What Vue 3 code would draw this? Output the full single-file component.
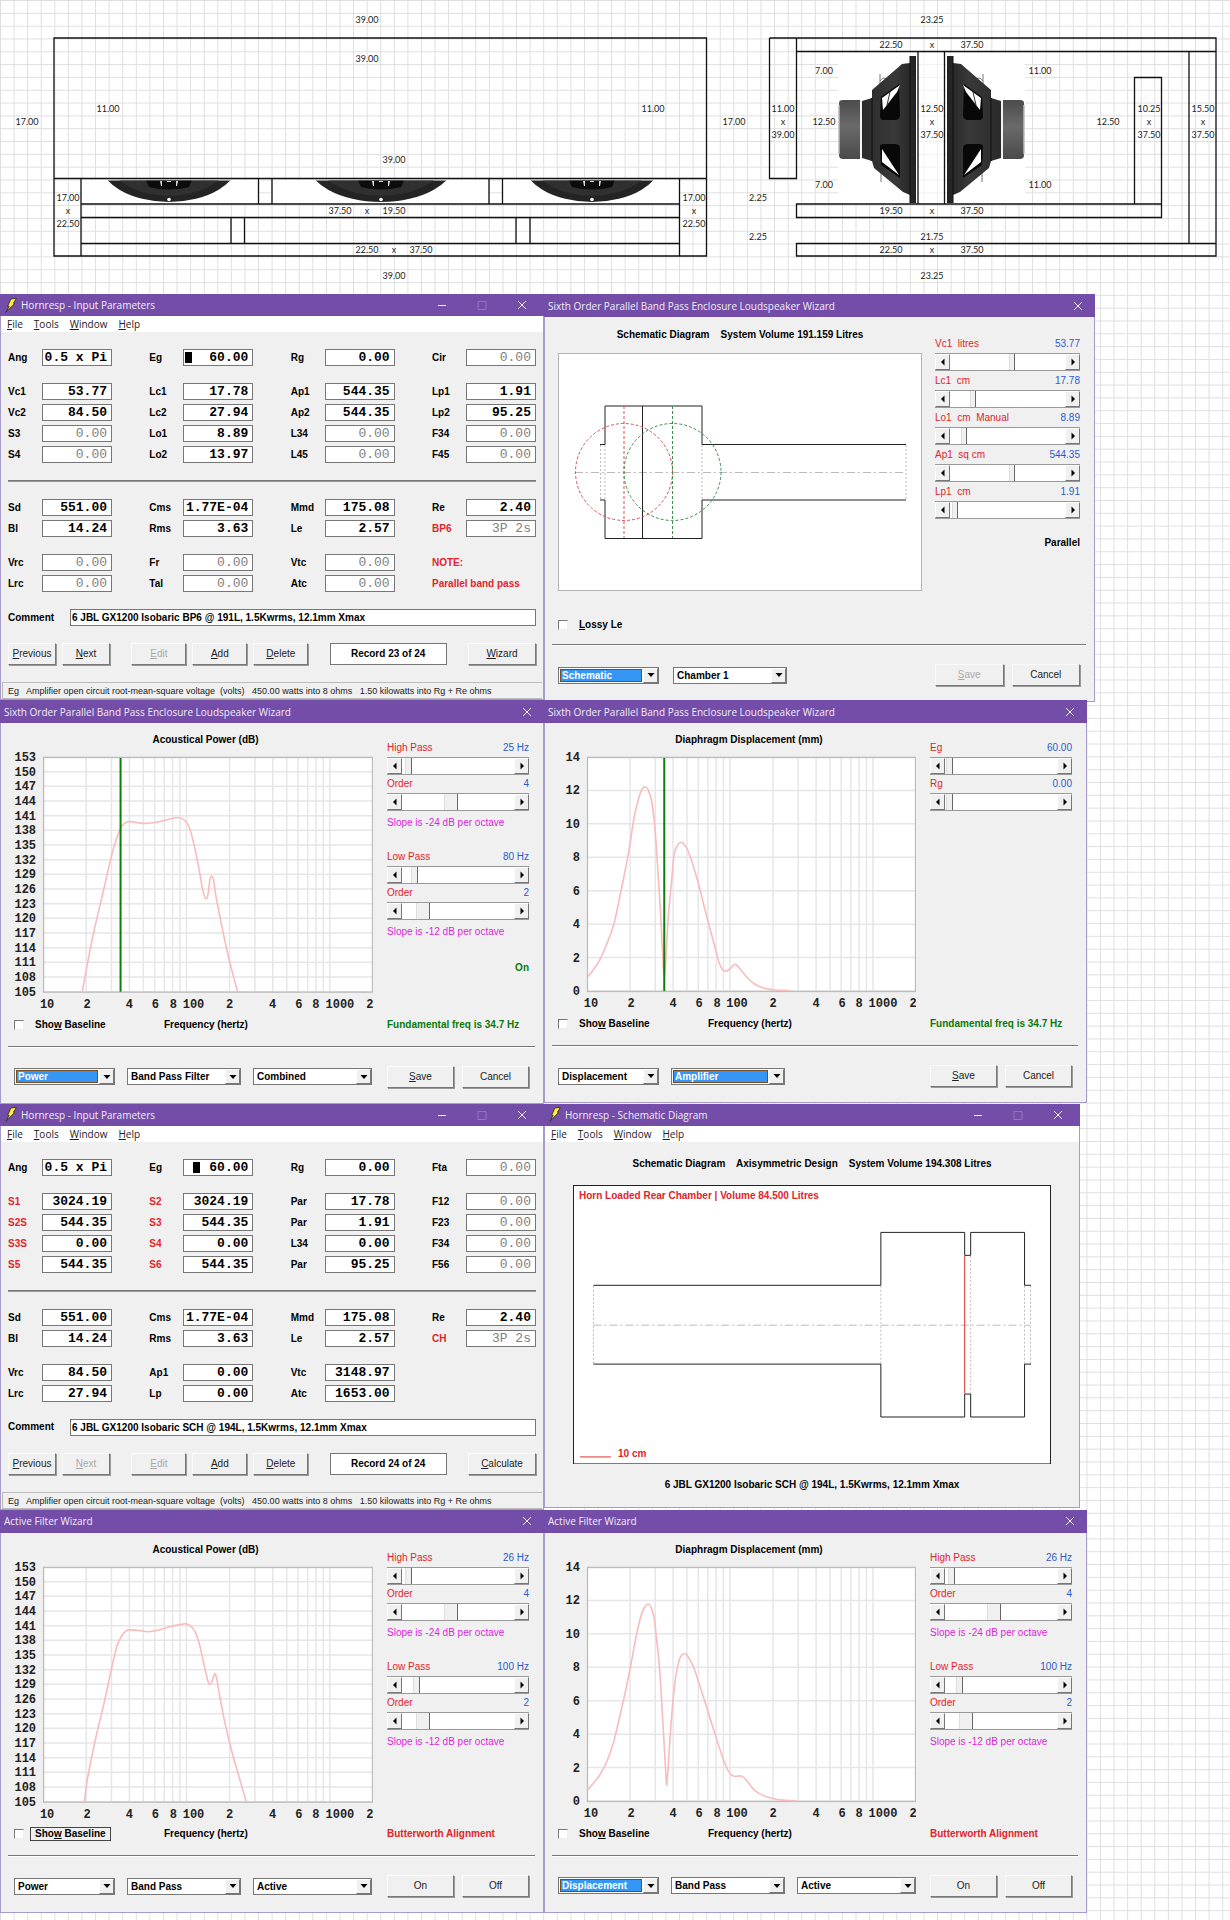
<script setup>
import { reactive } from "vue";

// cabinet drawing -----------------------------------------------------------

const boardLines =
  "M54 38H706.5V256H54Z M54 178.5H706.5 M81 178.5V256 M679.5 178.5V256 " +
  "M81 204H679.5 M81 217.5H679.5 M81 243.5H679.5 " +
  "M258.5 178.5V204 M272 178.5V204 M489 178.5V204 M502.5 178.5V204 " +
  "M231 217.5V243.5 M244.5 217.5V243.5 M516 217.5V243.5 M530 217.5V243.5 " +
  "M769.5 38H1216V256H796.5V243.5H1216 M769.5 38V178.5H796.5V38 " +
  "M796.5 51.5H1216 M1189 51.5V243.5 M796.5 204H1161.5V217.5H796.5Z " +
  "M1134.5 204V77.5H1161.5V204 M918 51.5V204 M944.5 51.5V204";

const dims = [
  [367, 20, "39.00"], [367, 59, "39.00"], [394, 160, "39.00"], [394, 276, "39.00"],
  [108, 109, "11.00"], [653, 109, "11.00"], [27, 122, "17.00"], [734, 122, "17.00"],
  [68, 198, "17.00"], [68, 211, "x"], [68, 224, "22.50"],
  [694, 198, "17.00"], [694, 211, "x"], [694, 224, "22.50"],
  [340, 211, "37.50"], [367, 211, "x"], [394, 211, "19.50"],
  [367, 250, "22.50"], [394, 250, "x"], [421, 250, "37.50"],
  [932, 20, "23.25"], [932, 276, "23.25"], [932, 237, "21.75"],
  [891, 45, "22.50"], [932, 45, "x"], [972, 45, "37.50"],
  [891, 211, "19.50"], [932, 211, "x"], [972, 211, "37.50"],
  [891, 250, "22.50"], [932, 250, "x"], [972, 250, "37.50"],
  [824, 71, "7.00"], [824, 185, "7.00"], [1040, 71, "11.00"], [1040, 185, "11.00"],
  [783, 109, "11.00"], [783, 122, "x"], [783, 135, "39.00"],
  [824, 122, "12.50"], [1108, 122, "12.50"],
  [932, 109, "12.50"], [932, 122, "x"], [932, 135, "37.50"],
  [1149, 109, "10.25"], [1149, 122, "x"], [1149, 135, "37.50"],
  [1203, 109, "15.50"], [1203, 122, "x"], [1203, 135, "37.50"],
  [758, 198, "2.25"], [758, 237, "2.25"],
];

const cones = [
  { cx: 169, rx: 61 },
  { cx: 381, rx: 65 },
  { cx: 592, rx: 61 },
];

// plots ---------------------------------------------------------------------

const PLOT = { x: 29, y: 8, w: 329, h: 234 };
const DECADE = PLOT.w / Math.log10(200);

const freqX = (f) => PLOT.x + DECADE * Math.log10(f / 10);

const gridFreqs = [
  20, 30, 40, 50, 60, 70, 80, 90, 100, 200, 300, 400, 500, 600, 700, 800, 900, 1000,
];

const xTicks = [
  [33, "10"], [73, "2"], [115, "4"], [141, "6"], [159, "8"], [179, "100"],
  [215, "2"], [258, "4"], [284, "6"], [301, "8"], [325, "1000"], [355, "2"],
];

const ticks = (from, to, step) => {
  const out = [];
  for (let v = from; v >= to; v -= step) {
    out.push({ text: v, y: PLOT.y + (PLOT.h * (from - v)) / (from - to) });
  }
  return out;
};

const dbTicks = ticks(153, 105, 3);
const mmTicks = ticks(14, 0, 2);

// Catmull-Rom through the sampled response
const smooth = (pts) => {
  let d = `M${pts[0][0]} ${pts[0][1]}`;
  for (let i = 0; i < pts.length - 1; i++) {
    const a = pts[i - 1] || pts[i];
    const b = pts[i];
    const c = pts[i + 1];
    const e = pts[i + 2] || c;
    d += `C${b[0] + (c[0] - a[0]) / 6} ${b[1] + (c[1] - a[1]) / 6} `;
    d += `${c[0] - (e[0] - b[0]) / 6} ${c[1] - (e[1] - b[1]) / 6} ${c[0]} ${c[1]}`;
  }
  return d;
};

const powerA = smooth([
  [39.2, 234], [43.4, 210.6], [50.3, 175.6], [60.8, 130.6], [67.7, 100.6], [73, 82],
  [77.1, 71.3], [81.6, 66], [86.8, 64.4], [99.7, 66.2], [112.9, 65], [123.3, 62.6],
  [134.5, 60.3], [141.4, 63.3], [146, 70.6], [150.5, 87.3], [155.3, 110.6],
  [159.1, 132.3], [162.3, 141.3], [164.4, 137.3], [166.4, 122.3], [168.2, 118.6],
  [169.9, 122.3], [172.7, 140.6], [179, 172.3], [186, 204], [194, 234],
]);

const powerB = smooth([
  [41.3, 234], [44.1, 212.3], [52.1, 172.3], [60.8, 135.7], [68.4, 100.7], [73.6, 79],
  [78.2, 69], [81.6, 64.7], [85.8, 62.7], [95.5, 63.3], [104.2, 64.5], [114.7, 63],
  [126.8, 59.3], [137.2, 57.3], [142.5, 56.7], [147.7, 59.3], [152.2, 65.7],
  [156.4, 79], [161.6, 102.3], [164.4, 114], [166.4, 117.3], [168.5, 114],
  [171, 106.7], [173, 110.7], [176.2, 129], [181.4, 155.7], [188.7, 185.7],
  [196.3, 212.3], [202.6, 234],
]);

const displacementA = smooth([
  [1, 219.7], [5.4, 214], [12.5, 203.3], [19.6, 187.3], [26.8, 167.3], [34, 134],
  [39.3, 107.3], [42.9, 87.3], [47.1, 60.7], [51.8, 40.7], [55.4, 31.7], [58.2, 29.7],
  [61, 32.3], [64.6, 44], [67.9, 70.7], [70.7, 110.7], [73.6, 157.3], [76, 204],
  [77.1, 219], [78.6, 207], [81, 164], [84.6, 124], [87.1, 97.3], [90.4, 88.3],
  [93.9, 85.3], [97.1, 87.3], [101.8, 95.7], [110.7, 124], [119.6, 159],
  [126.8, 185.7], [132.1, 205.7], [136, 213], [138.9, 214.3], [142.9, 212],
  [147.9, 207.3], [152.1, 210.7], [158.9, 219], [167.9, 227.3], [182, 232.3],
  [203.6, 233.7],
]);

const displacementB = smooth([
  [0.7, 222.7], [6.8, 215.7], [12.1, 209], [19.3, 195.7], [26.4, 175.7],
  [33.6, 145.7], [38.9, 122.3], [43.6, 99], [48.6, 72.3], [53.9, 49], [57.9, 39.7],
  [61.1, 37], [63.9, 39.7], [67.1, 50.7], [69.6, 72.3], [72.9, 105.7], [75.7, 152.3],
  [78.2, 195.7], [79.6, 217.7], [81, 202.3], [83.9, 159], [87.1, 122.3], [90, 102.3],
  [93.6, 89.7], [97.5, 86.7], [100.7, 89], [106.8, 100.7], [113.9, 122.3],
  [122.9, 150.7], [131.8, 179], [138.9, 199], [143.6, 207.3], [147.9, 209.3],
  [154.3, 209], [158.6, 212.3], [169.3, 224.7], [183.6, 231], [197.9, 233.3],
  [209, 233.7],
]);

// windows -------------------------------------------------------------------

// field: [label, value, flags] with r = red label, d = disabled
const paramsA = [
  [["Ang", "0.5 x Pi"], ["Eg", "60.00", "c"], ["Rg", "0.00"], ["Cir", "0.00", "d"]],
  [
    ["Vc1", "53.77"], ["Lc1", "17.78"], ["Ap1", "544.35"], ["Lp1", "1.91"],
    ["Vc2", "84.50"], ["Lc2", "27.94"], ["Ap2", "544.35"], ["Lp2", "95.25"],
    ["S3", "0.00", "d"], ["Lo1", "8.89"], ["L34", "0.00", "d"], ["F34", "0.00", "d"],
    ["S4", "0.00", "d"], ["Lo2", "13.97"], ["L45", "0.00", "d"], ["F45", "0.00", "d"],
  ],
  [
    ["Sd", "551.00"], ["Cms", "1.77E-04"], ["Mmd", "175.08"], ["Re", "2.40"],
    ["Bl", "14.24"], ["Rms", "3.63"], ["Le", "2.57"], ["BP6", "3P 2s", "rd"],
  ],
  [
    ["Vrc", "0.00", "d"], ["Fr", "0.00", "d"], ["Vtc", "0.00", "d"], ["NOTE:", null, "r"],
    ["Lrc", "0.00", "d"], ["Tal", "0.00", "d"], ["Atc", "0.00", "d"],
    ["Parallel band pass", null, "r"],
  ],
];

const paramsB = [
  [["Ang", "0.5 x Pi"], ["Eg", "60.00", "m"], ["Rg", "0.00"], ["Fta", "0.00", "d"]],
  [
    ["S1", "3024.19", "r"], ["S2", "3024.19", "r"], ["Par", "17.78"], ["F12", "0.00", "d"],
    ["S2S", "544.35", "r"], ["S3", "544.35", "r"], ["Par", "1.91"], ["F23", "0.00", "d"],
    ["S3S", "0.00", "r"], ["S4", "0.00", "r"], ["L34", "0.00"], ["F34", "0.00", "d"],
    ["S5", "544.35", "r"], ["S6", "544.35", "r"], ["Par", "95.25"], ["F56", "0.00", "d"],
  ],
  [
    ["Sd", "551.00"], ["Cms", "1.77E-04"], ["Mmd", "175.08"], ["Re", "2.40"],
    ["Bl", "14.24"], ["Rms", "3.63"], ["Le", "2.57"], ["CH", "3P 2s", "rd"],
  ],
  [
    ["Vrc", "84.50"], ["Ap1", "0.00"], ["Vtc", "3148.97"], ["", null],
    ["Lrc", "27.94"], ["Lp", "0.00"], ["Atc", "1653.00"],
  ],
];

const statusText =
  "Eg   Amplifier open circuit root-mean-square voltage  (volts)   450.00 watts into 8 ohms   1.50 kilowatts into Rg + Re ohms";

const filterSliders = (hp, lp, lowPos) => [
  { label: "High Pass", value: `${hp} Hz`, pos: 3, thumb: "slim" },
  { label: "Order", value: "4", pos: 43, thumb: "wide", note: "Slope is -24 dB per octave" },
  { label: "Low Pass", value: `${lp} Hz`, pos: lowPos, thumb: "slim" },
  { label: "Order", value: "2", pos: 14, thumb: "wide", note: "Slope is -12 dB per octave" },
];

const rows = reactive([
  {
    cls: "row-1",
    windows: [
      {
        kind: "params",
        title: "Hornresp - Input Parameters",
        groups: paramsA,
        comment: "6 JBL GX1200 Isobaric BP6 @ 191L, 1.5Kwrms, 12.1mm Xmax",
        record: "Record 23 of 24",
        nextOff: false,
        action: "Wizard",
      },
      {
        kind: "wizard",
        title: "Sixth Order Parallel Band Pass Enclosure Loudspeaker Wizard",
        heading: "Schematic Diagram    System Volume 191.159 Litres",
        chamber: true,
        sliders: [
          { label: "Vc1  litres", value: "53.77", pos: 54, thumb: "thin" },
          { label: "Lc1  cm", value: "17.78", pos: 18, thumb: "thin" },
          { label: "Lo1  cm  Manual", value: "8.89", pos: 10, thumb: "thin" },
          { label: "Ap1  sq cm", value: "544.35", pos: 54, thumb: "thin" },
          { label: "Lp1  cm", value: "1.91", pos: 2, thumb: "thin" },
        ],
        check: ["", "L", "ossy Le"],
        side: "Parallel",
        selects: [
          { text: "Schematic", cls: "s-a", active: true },
          { text: "Chamber 1", cls: "s-b" },
        ],
        buttons: [{ key: "S", rest: "ave", off: true }, { key: "", rest: "Cancel" }],
      },
    ],
  },
  {
    cls: "row-2",
    windows: [
      {
        kind: "wizard",
        title: "Sixth Order Parallel Band Pass Enclosure Loudspeaker Wizard",
        heading: "Acoustical Power (dB)",
        curve: powerA,
        ticks: dbTicks,
        marker: 34.7,
        sliders: filterSliders(25, 80, 9),
        side: "On",
        status: { text: "Fundamental freq is 34.7 Hz", cls: "green" },
        check: ["Sho", "w", " Baseline"],
        selects: [
          { text: "Power", cls: "s-a", active: true },
          { text: "Band Pass Filter", cls: "s-b" },
          { text: "Combined", cls: "s-c" },
        ],
        buttons: [{ key: "S", rest: "ave" }, { key: "", rest: "Cancel" }],
      },
      {
        kind: "wizard",
        title: "Sixth Order Parallel Band Pass Enclosure Loudspeaker Wizard",
        heading: "Diaphragm Displacement (mm)",
        curve: displacementA,
        ticks: mmTicks,
        marker: 34.7,
        sliders: [
          { label: "Eg", value: "60.00", pos: 1, thumb: "slim" },
          { label: "Rg", value: "0.00", pos: 1, thumb: "slim" },
        ],
        status: { text: "Fundamental freq is 34.7 Hz", cls: "green" },
        check: ["Sho", "w", " Baseline"],
        selects: [
          { text: "Displacement", cls: "s-a" },
          { text: "Amplifier", cls: "s-b", active: true },
        ],
        buttons: [{ key: "S", rest: "ave" }, { key: "", rest: "Cancel" }],
      },
    ],
  },
  {
    cls: "row-3",
    windows: [
      {
        kind: "params",
        title: "Hornresp - Input Parameters",
        groups: paramsB,
        comment: "6 JBL GX1200 Isobaric SCH @ 194L, 1.5Kwrms, 12.1mm Xmax",
        record: "Record 24 of 24",
        nextOff: true,
        action: "Calculate",
      },
      {
        kind: "diagram",
        title: "Hornresp - Schematic Diagram",
        heading: "Schematic Diagram    Axisymmetric Design    System Volume 194.308 Litres",
        caption: "6 JBL GX1200 Isobaric SCH @ 194L, 1.5Kwrms, 12.1mm Xmax",
      },
    ],
  },
  {
    cls: "row-4",
    windows: [
      {
        kind: "wizard",
        title: "Active Filter Wizard",
        heading: "Acoustical Power (dB)",
        curve: powerB,
        ticks: dbTicks,
        sliders: filterSliders(26, 100, 10),
        status: { text: "Butterworth Alignment", cls: "red" },
        check: ["Sho", "w", " Baseline"],
        checkFocus: true,
        selects: [
          { text: "Power", cls: "s-a" },
          { text: "Band Pass", cls: "s-b" },
          { text: "Active", cls: "s-c" },
        ],
        buttons: [{ key: "", rest: "On" }, { key: "", rest: "Off" }],
      },
      {
        kind: "wizard",
        title: "Active Filter Wizard",
        heading: "Diaphragm Displacement (mm)",
        curve: displacementB,
        ticks: mmTicks,
        sliders: filterSliders(26, 100, 10),
        status: { text: "Butterworth Alignment", cls: "red" },
        check: ["Sho", "w", " Baseline"],
        selects: [
          { text: "Displacement", cls: "s-a", active: true },
          { text: "Band Pass", cls: "s-b" },
          { text: "Active", cls: "s-c" },
        ],
        buttons: [{ key: "", rest: "On" }, { key: "", rest: "Off" }],
      },
    ],
  },
]);

const menus = ["File", "Tools", "Window", "Help"];

const has = (field, flag) => (field[2] || "").includes(flag);

const nudge = (slider, step) => {
  slider.pos = Math.min(100, Math.max(0, Number(slider.pos) + step));
};
</script>

<template>
  <main class="sheet">
    <svg class="cells" aria-hidden="true">
      <defs>
        <pattern id="cell" width="13.58" height="12.82" patternUnits="userSpaceOnUse">
          <path d="M0.5 0V12.82M0 0.5H13.58" stroke="#dfdfdf" fill="none" />
        </pattern>
      </defs>
      <rect width="100%" height="100%" fill="url(#cell)" />
    </svg>

    <svg class="cabinet" viewBox="0 0 1230 294" role="img" aria-label="Cabinet dimensions">
      <defs>
        <linearGradient id="magnet" x1="0" x2="0" y1="0" y2="1">
          <stop offset="0" stop-color="#4c4c4c" />
          <stop offset="0.45" stop-color="#6a6a6a" />
          <stop offset="1" stop-color="#4a4a4a" />
        </linearGradient>
        <linearGradient id="basket" x1="0" x2="1">
          <stop offset="0" stop-color="#2a2a2a" />
          <stop offset="0.6" stop-color="#393939" />
          <stop offset="1" stop-color="#222" />
        </linearGradient>
        <clipPath id="baffle"><path d="M81 180.5H680V204H81Z" /></clipPath>
        <g id="driver">
          <path d="M50 40v-10 M50 37q4-6 8 0 M51 128v10" stroke="#777" fill="none" />
          <path d="M9 59Q9 56 13 56H30V115H13Q9 115 9 111Z" fill="url(#magnet)" />
          <path d="M9 61V110" stroke="#bbb" stroke-width="1.5" />
          <path d="M31 57V114" stroke="#eee" stroke-width="1.5" />
          <path
            d="M32 57L42 54V46L72 20L80 19V12H86V159H80V151L73 148L44 124L42 117L32 114Z"
            fill="url(#basket)"
          />
          <path d="M80 12V159" stroke="#111" />
          <path d="M42 54V117" stroke="#1f1f1f" stroke-width="2" />
          <path d="M51 53L69 40L70 72Q69 76 65 76H53Q50 75 50 72Z" fill="#080808" />
          <path d="M52 54L70 41L67 48L53 66Z" fill="#fff" />
          <path d="M60 48L57 61" stroke="#333" />
          <path d="M50 103Q50 100 53 100H66Q70 101 70 104L70 134L51 121Z" fill="#080808" />
          <path d="M52 105L69 131L52 118Z" fill="#fff" />
        </g>
      </defs>

      <path d="M838 53H917V203H838Z M946 53H1025V203H946Z" fill="#fff" />
      <path d="M82 180H258V203H82Z M273 180H488V203H273Z M503 180H679V203H503Z" fill="#fff" />
      <path d="M919 53H944V203H919Z" fill="#fff" opacity="0.6" />
      <g clip-path="url(#baffle)">
        <g v-for="c in cones" :key="c.cx">
          <ellipse :cx="c.cx" cy="160" :rx="c.rx * 1.15" ry="42" fill="#242424" />
          <ellipse :cx="c.cx" cy="158" :rx="c.rx" ry="38" fill="#303030" />
          <path :d="`M${c.cx - 23} 180.5L${c.cx - 20} 187Q${c.cx} 192 ${c.cx + 20} 187L${c.cx + 23} 180.5Z`" fill="#0c0c0c" />
          <path
            :d="`M${c.cx - 9} 181h2v5h-1z M${c.cx + 7} 181h2l-1 5h-1z M${c.cx - 2} 181h4v1h-4z`"
            fill="#ddd"
          />
          <circle :cx="c.cx" cy="199.5" r="1.8" fill="#fff" />
        </g>
      </g>
      <use href="#driver" x="830" y="44" />
      <use href="#driver" transform="translate(1033 44) scale(-1 1)" />
      <path :d="boardLines" fill="none" stroke="#111" stroke-width="1.3" />
      <text v-for="(d, i) in dims" :key="i" class="dim" :x="d[0]" :y="d[1] + 3">{{ d[2] }}</text>
    </svg>

    <div v-for="(row, r) in rows" :key="r" class="row" :class="row.cls">
      <section v-for="(win, w) in row.windows" :key="w" class="window" :class="win.kind">
        <header class="titlebar">
          <svg v-if="win.kind !== 'wizard'" class="bolt" viewBox="0 0 12 15" aria-hidden="true">
            <path d="M6 0.8L11.4 0.5L8.400 5.200L9.600 5.400L1 14.300L4.200 8.400L2.600 8.200Z" fill="#ffec3d" stroke="#222" stroke-width="0.8" />
          </svg>
          <h2>{{ win.title }}</h2>
          <button v-if="win.kind !== 'wizard'" type="button" aria-label="Minimize">
            <svg viewBox="0 0 10 10"><path d="M1 5.5H9" /></svg>
          </button>
          <button v-if="win.kind !== 'wizard'" type="button" aria-label="Maximize" disabled>
            <svg viewBox="0 0 10 10"><path d="M1 1.5H9V9.5H1Z" /></svg>
          </button>
          <button type="button" aria-label="Close">
            <svg viewBox="0 0 10 10"><path d="M1 1L9 9M9 1L1 9" /></svg>
          </button>
        </header>

        <nav v-if="win.kind !== 'wizard'" class="menu">
          <button v-for="m in menus" :key="m" type="button"><u>{{ m[0] }}</u>{{ m.slice(1) }}</button>
        </nav>

        <form v-if="win.kind === 'params'" class="params-body" @submit.prevent>
          <template v-for="(group, g) in win.groups" :key="g">
            <hr v-if="g === 2" />
            <div class="fields">
              <div v-for="(f, i) in group" :key="i" class="field">
                <label v-if="f[1] !== null" :class="{ red: has(f, 'r') }" :for="`f-${r}-${g}-${i}`">{{ f[0] }}</label>
                <span v-else class="remark" :class="{ red: has(f, 'r') }">{{ f[0] }}</span>
                <input
                  v-if="f[1] !== null"
                  :id="`f-${r}-${g}-${i}`"
                  v-model="f[1]"
                  type="text"
                  :disabled="has(f, 'd')"
                />
                <i v-if="has(f, 'c')" class="caret"></i>
                <i v-if="has(f, 'm')" class="caret moved"></i>
              </div>
            </div>
          </template>
          <div class="comment">
            <label :for="`comment-${r}`">Comment</label>
            <input :id="`comment-${r}`" v-model="win.comment" type="text" />
          </div>
          <div class="record-bar">
            <button class="btn w-nav" type="button"><u>P</u>revious</button>
            <button class="btn w-nav" type="button" :disabled="win.nextOff"><u>N</u>ext</button>
            <span class="spacer"></span>
            <button class="btn w-edit" type="button" disabled><u>E</u>dit</button>
            <button class="btn w-edit" type="button"><u>A</u>dd</button>
            <button class="btn w-edit" type="button"><u>D</u>elete</button>
            <span class="spacer"></span>
            <output class="record">{{ win.record }}</output>
            <span class="spacer"></span>
            <button class="btn w-action" type="button"><u>{{ win.action[0] }}</u>{{ win.action.slice(1) }}</button>
          </div>
        </form>
        <footer v-if="win.kind === 'params'" class="statusbar">{{ statusText }}</footer>

        <form v-if="win.kind === 'wizard'" class="wizard-body" :class="{ chamber: win.chamber }" @submit.prevent>
          <div class="main">
            <div class="plot">
              <h3>{{ win.heading }}</h3>
              <svg v-if="win.chamber" class="scheme" viewBox="0 0 364 238" role="img" aria-label="Chamber schematic">
                <rect x="0.5" y="0.5" width="363" height="237" fill="#fff" stroke="#b4b4b4" />
                <g fill="none">
                  <path d="M17 119.5H348" stroke="#bbb" stroke-dasharray="8 3 2 3" />
                  <path d="M42.5 92V147M47 92V147M144 92V147M348 92V147" stroke="#bbb" stroke-dasharray="2 2" />
                  <path d="M42 91.5H47V53H144V91.5H348M42 147H47V185.5H144V147H348M84.5 53V185" stroke="#222" />
                  <g stroke-dasharray="3 2">
                    <path d="M66 53V185" stroke="#e05050" />
                    <circle cx="66" cy="119" r="48.5" stroke="#e05050" />
                    <path d="M114.5 53V185" stroke="#3f8f4f" />
                    <circle cx="114.5" cy="119" r="48.5" stroke="#3f8f4f" />
                  </g>
                </g>
              </svg>
              <svg v-else class="chart" viewBox="0 0 358 262" role="img" :aria-label="win.heading">
                <rect x="29" y="8" width="329" height="234" fill="#fff" />
                <g stroke="#e6e6e6" stroke-width="1.5">
                  <line v-for="f in gridFreqs" :key="f" :x1="freqX(f)" :x2="freqX(f)" y1="8" y2="242" />
                  <line v-for="t in win.ticks" :key="t.text" x1="29" x2="358" :y1="t.y" :y2="t.y" />
                </g>
                <rect x="29.5" y="8.5" width="328" height="234" fill="none" stroke="#bcbcbc" stroke-width="1.3" />
                <path :d="win.curve" transform="translate(29 8)" fill="none" stroke="#f8bcbc" stroke-width="1.6" />
                <path v-if="win.marker" :d="`M${freqX(win.marker)} 9V242`" stroke="#0a800a" stroke-width="2" />
                <text v-for="t in win.ticks" :key="t.text" class="tick y" x="22" :y="t.y + 4">{{ t.text }}</text>
                <text v-for="(t, i) in xTicks" :key="i" class="tick x" :x="t[0]" y="258">{{ t[1] }}</text>
              </svg>
            </div>

            <div class="panel">
              <div v-for="(s, i) in win.sliders" :key="i" class="control">
                <div class="caption">
                  <label class="red" :for="`s-${r}-${w}-${i}`">{{ s.label }}</label>
                  <output>{{ s.value }}</output>
                </div>
                <div class="scroll">
                  <button type="button" aria-label="Decrease" @click="nudge(s, -1)">
                    <svg viewBox="0 0 8 8"><path d="M5.5 0.5V7.5L2 4Z" /></svg>
                  </button>
                  <input :id="`s-${r}-${w}-${i}`" v-model="s.pos" type="range" min="0" max="100" :class="s.thumb" />
                  <button type="button" aria-label="Increase" @click="nudge(s, 1)">
                    <svg viewBox="0 0 8 8"><path d="M2.5 0.5V7.5L6 4Z" /></svg>
                  </button>
                </div>
                <p v-if="s.note" class="note">{{ s.note }}</p>
              </div>
              <p v-if="win.side" class="side" :class="{ green: !win.chamber }">{{ win.side }}</p>
            </div>
          </div>

          <div class="options">
            <div class="axis">
              <label class="check">
                <input type="checkbox" />
                <span :class="{ focus: win.checkFocus }">{{ win.check[0] }}<u>{{ win.check[1] }}</u>{{ win.check[2] }}</span>
              </label>
              <span v-if="!win.chamber">Frequency (hertz)</span>
            </div>
            <p v-if="win.status" class="state" :class="win.status.cls">{{ win.status.text }}</p>
          </div>

          <hr />

          <div class="actions">
            <span v-for="s in win.selects" :key="s.text" class="combo" :class="[s.cls, { active: s.active }]">
              <select :aria-label="s.text">
                <option>{{ s.text }}</option>
              </select>
              <i><svg viewBox="0 0 8 8"><path d="M0.5 2H7.5L4 6Z" /></svg></i>
            </span>
            <span class="push">
              <button v-for="b in win.buttons" :key="b.rest" class="btn" type="button" :disabled="b.off"><u>{{ b.key }}</u>{{ b.rest }}</button>
            </span>
          </div>
        </form>

        <div v-if="win.kind === 'diagram'" class="diagram-body">
          <h3>{{ win.heading }}</h3>
          <figure>
            <svg viewBox="0 0 479 280" role="img" aria-label="Horn schematic">
              <rect x="0.5" y="0.5" width="478" height="279" fill="#fff" stroke="#222" />
              <g fill="none">
                <path d="M20.5 140.5H458" stroke="#bbb" stroke-dasharray="8 3 2 3" />
                <path d="M20.5 101V179M308.5 101V179M398.5 71V209M452.5 101V179M458.5 101V179" stroke="#bbb" stroke-dasharray="2 2" />
                <path d="M20.5 100.5H308.5V47.5H392.5V70.5H398.5V47.5H452.5V100.5H459" stroke="#222" />
                <path d="M20.5 179.5H308.5V232.5H392.5V209.5H398.5V232.5H452.5V179.5H459" stroke="#222" />
                <path d="M392.5 71V209M7 272.5H38" stroke="#e03030" />
              </g>
            </svg>
            <span class="volume red">Horn Loaded Rear Chamber | Volume 84.500 Litres</span>
            <span class="scale red">10 cm</span>
          </figure>
          <p>{{ win.caption }}</p>
        </div>
      </section>
    </div>
  </main>
</template>

<style>
body {
  margin: 0;
}
</style>

<style scoped>
* {
  box-sizing: border-box;
}

.sheet {
  position: relative;
  min-height: 100vh;
  background: #fff;
  color: #000;
  font: 10px/18px "Liberation Sans", Arial, sans-serif;
}

.cells {
  position: absolute;
  inset: 0;
  width: 100%;
  height: 100%;
}

.cabinet {
  position: relative;
  display: block;
  width: 100%;
}

.dim {
  font: 9px Lato, sans-serif;
  text-anchor: middle;
  fill: #222;
}

.row {
  position: relative;
  display: grid;
  align-items: start;
}

.row-1 {
  grid-template-columns: minmax(0, 544fr) minmax(0, 551fr) 135fr;
}

.row-2,
.row-4 {
  grid-template-columns: minmax(0, 544fr) minmax(0, 543fr) 143fr;
}

.row-3 {
  grid-template-columns: minmax(0, 544fr) minmax(0, 536fr) 150fr;
}

.row-1 .wizard {
  margin-bottom: -3px;
}

.window {
  background: #f0f0f0;
  border: 1px solid #a79bcb;
  border-top: 0;
}

.titlebar {
  display: flex;
  align-items: center;
  height: 22px;
  margin: 0 -1px;
  padding: 0 2px 0 5px;
  background: #744da9;
  color: #f2ecf8;
}

.wizard .titlebar {
  height: 23px;
  padding: 0 0 0 4px;
}

.titlebar h2 {
  flex: 1;
  margin: 0;
  overflow: hidden;
  white-space: nowrap;
  font: 10px/22px "Open Sans", "Noto Sans", sans-serif;
}

.bolt {
  width: 12px;
  height: 15px;
  margin-right: 4px;
}

.titlebar button {
  width: 40px;
  height: 22px;
  padding: 0;
  border: 0;
  background: none;
}

.wizard .titlebar button {
  width: 34px;
}

.titlebar button svg {
  display: block;
  width: 10px;
  height: 10px;
  margin: auto;
  fill: none;
  stroke: #f2ecf8;
}

.titlebar button:disabled svg {
  stroke: #9474bd;
}

.menu {
  display: flex;
  gap: 11px;
  height: 16px;
  padding-left: 6px;
  background: #fff;
}

.menu button {
  padding: 0;
  border: 0;
  background: none;
  color: #222;
  font: 10px/16px "Open Sans", "Noto Sans", sans-serif;
}

.red {
  color: #e0242a;
}

.green {
  color: #0a7a0a;
}

/* input parameters */

.params-body {
  display: flex;
  flex-direction: column;
  gap: 17px;
  padding: 17px 7px 17px;
  font-weight: bold;
}

.fields {
  display: grid;
  grid-template-columns: repeat(4, 104px);
  justify-content: space-between;
  row-gap: 4px;
}

.field {
  position: relative;
  display: flex;
  justify-content: space-between;
  height: 17px;
  line-height: 17px;
}

.remark {
  white-space: nowrap;
}

.field input,
.comment input,
.record {
  height: 17px;
  border: 1px solid #777;
  background: #fff;
  color: #000;
}

.field input {
  width: 70px;
  padding: 0 4px 0 0;
  font: bold 13px/15px "Liberation Mono", monospace;
  text-align: right;
}

.field input:disabled {
  color: #808080;
  font-weight: normal;
}

.caret {
  position: absolute;
  left: 36px;
  top: 3px;
  width: 7px;
  height: 11px;
  background: #000;
}

.caret.moved {
  left: 44px;
}

hr {
  width: 100%;
  height: 2px;
  margin: 0;
  border: 0;
  background: #777;
  border-bottom: 1px solid #fff;
}

.params-body hr {
  border-bottom-color: #999;
}

.comment {
  display: flex;
  align-items: center;
  height: 17px;
}

.comment label {
  width: 62px;
}

.comment input {
  flex: 1;
  min-width: 0;
  padding: 0 1px;
  font: inherit;
  line-height: 15px;
}

.record-bar {
  display: flex;
  gap: 6px;
  height: 22px;
}

.spacer {
  flex: 1;
}

.btn {
  height: 22px;
  padding: 0;
  border: 1px solid;
  border-color: #fafafa #777 #777 #fafafa;
  box-shadow: 1px 1px 0 #999;
  background: #f0f0f0;
  color: #222;
  font: 10px/20px "Liberation Sans", Arial, sans-serif;
}

.btn:disabled {
  color: #aaa;
}

.w-nav {
  width: 48px;
}

.w-edit {
  width: 55px;
}

.w-action {
  width: 68px;
}

.record {
  width: 117px;
  height: 22px;
  line-height: 20px;
  text-align: center;
}

.statusbar {
  height: 17px;
  margin: 0 1px;
  padding-left: 5px;
  border: 1px solid #bbb;
  border-right: 0;
  overflow: hidden;
  color: #222;
  font-size: 9px;
  line-height: 16px;
  white-space: pre;
}

/* wizards */

.wizard-body {
  display: flex;
  flex-direction: column;
  padding: 8px 14px 15px 13px;
}

.main,
.options {
  display: grid;
  grid-template-columns: minmax(0, 1fr) 142px;
  column-gap: 14px;
}

h3 {
  margin: 0;
  font: bold 10px/18px "Liberation Sans", Arial, sans-serif;
  text-align: center;
  white-space: pre;
}

.plot h3 {
  padding-left: 24px;
}

.plot svg {
  display: block;
  width: 100%;
}

.tick {
  font: bold 12px "Liberation Mono", monospace;
  fill: #222;
}

.tick.y {
  text-anchor: end;
}

.tick.x {
  text-anchor: middle;
}

.panel {
  display: flex;
  flex-direction: column;
  padding-top: 8px;
}

.caption {
  display: flex;
  justify-content: space-between;
  line-height: 18px;
  white-space: pre;
}

.caption output {
  color: #2a5bd0;
}

.scroll {
  display: flex;
  height: 18px;
  border-top: 1px solid #999;
  border-bottom: 1px solid #999;
}

.scroll button {
  width: 15px;
  padding: 0;
  border: 1px solid;
  border-color: #fff #777 #777 #fff;
  background: #f0f0f0;
}

.scroll button svg,
.combo svg {
  display: block;
  width: 8px;
  height: 8px;
  margin: auto;
}

.scroll input {
  flex: 1;
  min-width: 0;
  height: 16px;
  margin: 0;
  appearance: none;
  background: #fff;
}

.scroll input::-webkit-slider-thumb {
  appearance: none;
  width: 7px;
  height: 16px;
  border: 0;
  border-right: 1px solid #666;
  border-left: 1px solid #ddd;
  background: #f0f0f0;
}

.scroll input.thin::-webkit-slider-thumb {
  width: 6px;
}

.scroll input.wide::-webkit-slider-thumb {
  width: 14px;
}

.note {
  margin: 0 0 13px;
  color: #d828d8;
  line-height: 24px;
  white-space: nowrap;
}

.side {
  margin: 2px 0 0;
  font-weight: bold;
  text-align: right;
}

.options {
  padding-top: 4px;
  font-weight: bold;
  white-space: nowrap;
}

.axis {
  display: grid;
  grid-template-columns: 150px 1fr;
}

.check {
  display: flex;
  align-items: center;
  gap: 6px;
}

.check input {
  appearance: none;
  width: 10px;
  height: 10px;
  margin: 0;
  border: 1px solid;
  border-color: #777 #eee #eee #777;
  background: #fff;
}

.check span {
  padding: 0 4px;
  border: 1px solid transparent;
  line-height: 12px;
}

.check .focus {
  border-color: #444;
}

.state {
  margin: 0;
}

.wizard-body hr {
  width: auto;
  margin: 12px -6px 18px;
}

.actions {
  display: flex;
  align-items: center;
  gap: 12px;
  height: 22px;
}

.combo {
  display: flex;
  height: 17px;
  border: 1px solid #777;
  background: #fff;
}

.combo select {
  flex: 1;
  min-width: 0;
  margin: 0;
  padding: 0 2px;
  appearance: none;
  border: 1px solid transparent;
  border-radius: 0;
  background: #fff;
  color: #000;
  font: bold 10px/13px "Liberation Sans", Arial, sans-serif;
}

.combo.active select {
  margin: 1px;
  padding: 0 1px;
  border-color: #7a4a20;
  background: #3596f5;
  color: #fff;
  line-height: 11px;
}

.combo i {
  display: flex;
  width: 15px;
  border: 1px solid;
  border-color: #fff #777 #777 #fff;
  background: #f0f0f0;
}

.s-a {
  width: 101px;
}

.s-b {
  width: 114px;
}

.s-c {
  width: 119px;
}

.push {
  display: grid;
  grid-template-columns: 1fr 1fr;
  gap: 8px;
  width: 142px;
  margin-left: auto;
}

.chamber {
  padding-top: 9px;
}

.chamber .main,
.chamber .options {
  grid-template-columns: minmax(0, 1fr) 145px;
  column-gap: 13px;
}

.chamber .plot h3 {
  padding-left: 0;
}

.chamber .scheme {
  margin-top: 9px;
}

.chamber .panel {
  gap: 1px;
  padding-top: 9px;
}

.chamber .side {
  margin-top: 14px;
}

.chamber .options {
  padding-top: 27px;
}

.chamber .actions {
  gap: 14px;
}

.chamber .push {
  width: 145px;
}

/* horn diagram */

.diagram-body {
  display: flex;
  flex-direction: column;
  gap: 12px;
  padding: 13px 28px;
  font-weight: bold;
  text-align: center;
}

figure {
  position: relative;
  margin: 0;
}

.diagram-body svg {
  display: block;
  width: 100%;
}

.volume,
.scale {
  position: absolute;
  left: 6px;
  top: 2px;
}

.scale {
  top: auto;
  bottom: 1px;
  left: 45px;
}

.diagram-body p {
  margin: 0;
}
</style>
